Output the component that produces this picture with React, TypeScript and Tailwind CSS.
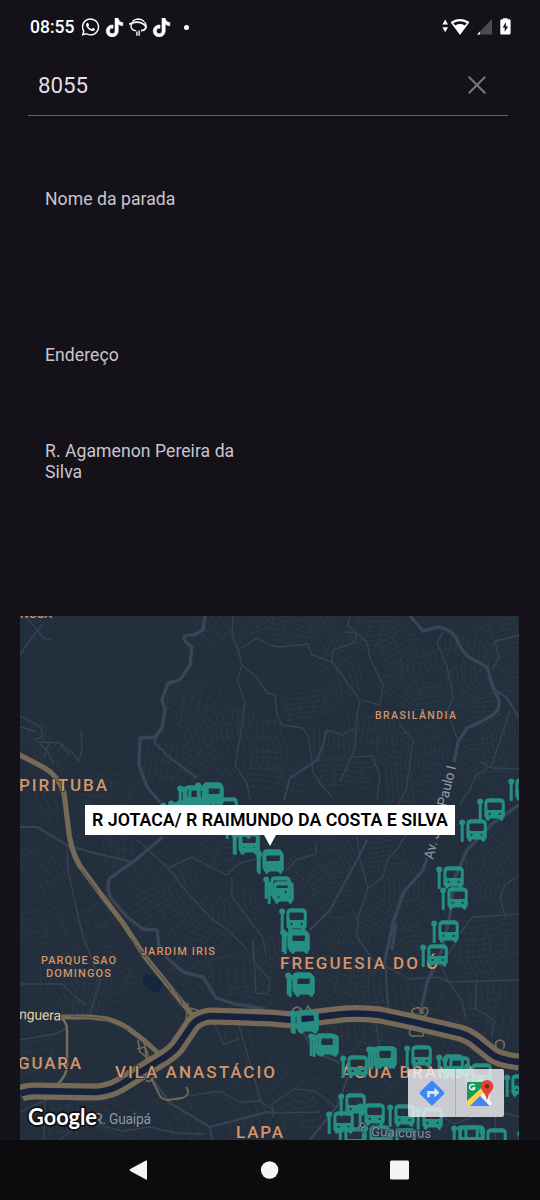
import React from "react";
import { FaWhatsapp, FaTiktok } from "react-icons/fa6";

type Pt = [number, number];

const smooth = (pts: Pt[]) => {
  let d = `M${pts[0][0]} ${pts[0][1]}`;
  for (let i = 1; i < pts.length - 1; i++) {
    const mx = (pts[i][0] + pts[i + 1][0]) / 2;
    const my = (pts[i][1] + pts[i + 1][1]) / 2;
    d += `Q${pts[i][0]} ${pts[i][1]} ${mx} ${my}`;
  }
  const l = pts[pts.length - 1];
  return d + `L${l[0]} ${l[1]}`;
};

/* cx, cy, half width, half height, angle, spacing */
const districts: number[][] = [
  [38, 740, 16, 16, 20, 6], [52, 760, 18, 10, -40, 6], [210, 628, 20, 14, 50, 6], [250, 626, 24, 12, -30, 5],
  [180, 708, 18, 20, 5, 6], [197, 695, 16, 20, 80, 9], [205, 735, 26, 22, 65, 6], [165, 762, 22, 22, 100, 6],
  [205, 768, 34, 18, 40, 6], [232, 722, 16, 18, 88, 5], [262, 745, 28, 22, 88, 6], [275, 772, 30, 18, 12, 6],
  [290, 632, 24, 14, 15, 5], [330, 632, 22, 16, 60, 5], [340, 672, 26, 16, 56, 6], [372, 632, 22, 18, 20, 5],
  [400, 650, 22, 22, -20, 6], [400, 685, 22, 16, 35, 5], [428, 668, 18, 24, 70, 6], [425, 700, 24, 12, 10, 5],
  [470, 680, 22, 24, 65, 5], [472, 640, 18, 22, 110, 6], [505, 635, 18, 20, -15, 5], [507, 670, 16, 22, 30, 5],
  [475, 705, 22, 16, 20, 5], [500, 735, 22, 20, 60, 5], [310, 705, 28, 14, -15, 5], [332, 745, 18, 22, 90, 5],
  [372, 728, 16, 26, 88, 5], [392, 750, 20, 20, 5, 6], [425, 745, 22, 22, 75, 5], [345, 775, 28, 14, 0, 5],
  [398, 782, 24, 14, 85, 5], [430, 785, 16, 20, 25, 6], [480, 760, 26, 20, -25, 5], [500, 785, 20, 16, 70, 6],
  [50, 808, 22, 14, 80, 8], [100, 820, 24, 20, 40, 7], [45, 865, 24, 18, 55, 7], [110, 790, 26, 14, 20, 8],
  [120, 850, 24, 14, 100, 7], [160, 880, 24, 24, 35, 6], [150, 910, 26, 18, -30, 6], [190, 895, 24, 22, 55, 6],
  [200, 935, 28, 18, 40, 6], [235, 910, 18, 26, 60, 6], [220, 855, 24, 16, 15, 6], [95, 920, 18, 16, 60, 8],
  [45, 925, 24, 18, -25, 7], [65, 985, 34, 22, 70, 6], [110, 975, 24, 24, 25, 7], [90, 1000, 26, 16, 100, 5],
  [190, 975, 24, 16, 30, 7], [235, 970, 20, 24, 75, 8], [270, 955, 18, 26, 50, 6], [250, 995, 24, 12, 10, 6],
  [300, 880, 24, 22, 35, 5], [335, 855, 24, 18, 60, 5], [330, 890, 20, 24, -25, 5], [345, 930, 18, 26, 85, 5],
  [380, 855, 22, 18, 15, 5], [400, 880, 22, 22, 80, 5], [375, 915, 20, 22, 30, 5], [415, 910, 16, 26, 65, 5],
  [410, 950, 22, 20, -15, 5], [470, 880, 22, 22, 70, 5], [500, 850, 20, 22, 40, 5], [500, 890, 20, 22, 110, 5],
  [485, 940, 32, 22, -10, 6], [480, 970, 34, 18, 78, 6], [345, 975, 28, 20, 5, 6], [370, 990, 24, 18, 85, 6],
  [325, 995, 22, 14, 35, 6], [410, 995, 22, 14, 70, 7], [465, 1005, 30, 14, 12, 7], [495, 1025, 22, 14, 80, 8],
  [340, 1035, 22, 16, 75, 7], [380, 1040, 22, 14, 15, 7], [440, 1060, 30, 16, 70, 8], [285, 1085, 30, 24, 35, 7],
  [240, 1110, 30, 20, 60, 8], [300, 1115, 22, 20, -20, 7], [110, 1120, 36, 16, 20, 9], [180, 1120, 30, 14, 70, 9],
  [60, 1110, 30, 16, 80, 9], [400, 1090, 30, 16, 60, 7], [440, 1125, 34, 14, 15, 7], [500, 1100, 20, 24, 70, 7],
  [240, 1050, 24, 14, 75, 12], [40, 1060, 20, 18, 10, 10], [350, 1115, 24, 22, 60, 7],
];

const streets = districts
  .map(([cx, cy, hw, hh, deg, gap], k) => {
    const a = (deg * Math.PI) / 180;
    const at = (u: number, v: number): Pt => [
      Math.round((cx + u * Math.cos(a) - v * Math.sin(a)) * 10) / 10,
      Math.round((cy + u * Math.sin(a) + v * Math.cos(a)) * 10) / 10,
    ];
    let d = "";
    for (let v = -hh, i = 0; v <= hh; v += gap, i++) {
      const cut = ((i * 7 + k * 5) % 9) - 2;
      const bend = ((k % 5) - 2) * 2.2;
      const pts: Pt[] = [];
      for (let s = 0; s <= 5; s++) {
        const u = -hw + cut + ((2 * hw - cut * 1.5) * s) / 5;
        pts.push(at(u, v + Math.sin(s * 1.25 + k) * bend));
      }
      d += smooth(pts);
    }
    for (let u = -hw + 4, i = 0; u < hw; u += gap * 2.6, i++) {
      d += smooth([at(u, -hh * 0.7), at(u + 2, 0), at(u - 1, hh * (0.3 + ((i + k) % 3) * 0.3))]);
    }
    return d;
  })
  .join("");

const minorRoads = [
  "M233 616L232 635L238 650L242 665L237 680L245 702L240 738L235 765L247 783L250 800",
  "M242 665L257 678L267 693L275 695L277 715L282 725L303 728L309 738L313 772L320 783L332 797",
  "M238 650L257 638L270 645L280 647L308 644L312 655L332 662L360 700L357 715L355 748L340 782",
  "M332 662L333 650L355 642L357 633L346 632",
  "M350 616L348 625L367 642L370 658L383 685L380 705L362 700",
  "M443 632L437 643L447 665L453 698L447 712L457 738",
  "M519 635L495 641L499 658L492 669",
  "M327 730L342 735L355 728",
  "M400 725L413 740L410 765L406 790L398 805",
  "M350 757L372 756L380 776L377 800",
  "M510 711L500 740L492 765L476 775L470 790L460 804",
  "M519 769L492 768L480 762",
  "M357 837L360 860L368 888L358 917L357 937L373 960",
  "M407 833L398 848L387 860L383 877L368 888",
  "M460 933L473 917L507 915L519 914",
  "M316 843L316 854L296 860L285 872",
  "M519 875L505 885L500 899L506 918",
  "M137 840L168 868L192 857L227 875L240 863L262 857",
  "M168 868L188 893L210 917L230 932L246 948",
  "M232 877L232 897L250 921L263 938L266 955",
  "M67 845L68 870L73 893L83 937L100 980L90 1013",
  "M20 655L30 640L42 625",
  "M28 620L37 629L43 638L51 640",
  "M20 716L41 727L42 737L33 740M20 727L35 731M37 742L60 743L71 751L79 761L82 748L81 730",
  "M40 743L48 752L54 765M50 741L44 757M60 744L70 755",
  "M373 960L410 979L438 977L449 982L519 980M456 943L440 965L449 982",
  "M449 982L462 1001L466 1020M477 980L475 1008L494 1020L492 1035",
  "M20 1040L55 1034L67 1028M20 1112L50 1098L90 1101M45 1100L44 1140",
  "M60 1140L75 1128L96 1124L122 1131L150 1127L175 1133L205 1134",
  "M273 1117L272 1104L294 1089L315 1091L337 1108M270 1113L320 1112",
  "M340 1012L375 1018L380 1050M238 1022L249 1060L262 1105M215 1025L223 1044L239 1039",
  "M188 1096L220 1091L240 1102L260 1101L275 1111",
  "M20 984L62 984L85 1005M253 940L253 960L270 980L268 994L256 993Z",
  "M430 1110L455 1124L490 1110L519 1117M495 1140L496 1104L519 1083",
];

const midRoads = [
  "M162 728L154 742L170 758L197 778",
  "M327 730L323 745L317 760L290 778L284 800",
  "M367 840L357 860L330 910L310 930",
  "M493 688L507 698L519 718",
  "M20 827L37 827L67 845L90 852L133 862",
  "M385 960L388 1008",
  "M153 1080L170 1103L210 1127L212 1140M210 1127L267 1112L278 1113",
  "M300 1028L315 1052L340 1063M350 1070L338 1105L310 1140",
];

const bigRoads = [
  "M205 616L203 630L194 635Q180 634 186 642L192 647L190 665L180 680L168 683L162 700L165 710L162 728L155 737L140 738L139 765L147 787L160 802",
  "M410 616L423 631L437 627Q452 628 458 642Q463 655 474 660L487 667L493 688Q504 705 495 713Q487 720 467 728L458 742L454 762",
  "M427 858L423 870L403 893L393 923L385 960M396 923L392 950",
  "M519 805L493 823L467 850L454 880L450 915L442 950L427 983L416 1030",
  "M163 837L133 862L110 878Q106 884 110 897L127 917L143 929L157 930L159 945L167 958L183 972L203 977L216 998L235 1004L265 1009",
];

const river =
  "M20 1094Q25 1091 35 1091L97 1092Q109 1091 120 1085L157 1062Q170 1055 177 1047L192 1025Q198 1017 212 1016L270 1018L293 1020L335 1015Q353 1012 380 1015L413 1022L460 1033Q470 1036 478 1043L493 1055Q501 1060 519 1062";

const stops: Pt[] = [
  [160, 802], [168, 800], [177, 785], [181, 786], [195, 782], [196, 784], [210, 797], [224, 816],
  [231, 831], [232, 832], [255, 849], [256, 851], [263, 876], [266, 881], [279, 908], [280, 929], [282, 931],
  [285, 972], [287, 974], [289, 1010], [291, 1011], [308, 1033], [311, 1034], [340, 1055], [366, 1046],
  [369, 1046], [404, 1045], [436, 1054], [442, 1056], [464, 1063], [504, 1074], [338, 1093], [326, 1111],
  [357, 1103], [387, 1104], [415, 1107], [337, 1127], [362, 1125], [388, 1128], [451, 1125], [457, 1125],
  [479, 1128], [517, 1130], [436, 866], [440, 887], [431, 920], [420, 944], [459, 819], [477, 798], [508, 778],
];

const Bus = ({ x, y }: { x: number; y: number }) => (
  <g transform={`translate(${x} ${y})`} fill="#268f83">
    <circle cx="3.2" cy="3.6" r="3" />
    <rect x="1.7" y="3" width="3" height="20" rx="1" />
    <path
      fillRule="evenodd"
      d="M11.5 .2H23.5Q27.4 .6 27.8 4.4V17.8Q27.7 19.8 26.2 20.4V21.2Q26 22.8 24.4 22.8Q23.2 22.8 22.8 21.4L21.8 20.4H13.4L12.4 21.4Q12 22.8 10.8 22.8Q9.2 22.8 9 21.2V20.4Q7.5 19.8 7.4 17.8V4.4Q7.8 .6 11.5 .2ZM11.8 4.4Q10.5 4.5 10.4 5.6V10.8Q10.5 12 11.8 12.1H23.4Q24.7 12 24.8 10.8V5.6Q24.7 4.5 23.4 4.4ZM12.6 14.8A1.1 1.1 0 1 0 12.6 17A1.1 1.1 0 1 0 12.6 14.8ZM22.6 14.8A1.1 1.1 0 1 0 22.6 17A1.1 1.1 0 1 0 22.6 14.8Z"
    />
  </g>
);

type LabelProps = { x: number; y: number; w: number; size: number; children: string };
const Area = ({ x, y, w, size, children }: LabelProps) => (
  <text
    x={x}
    y={y}
    textLength={w}
    fontSize={size}
    fontWeight={500}
    fill="#d59568"
    stroke="#242f3e"
    strokeWidth="1.6"
    paintOrder="stroke"
  >
    {children}
  </text>
);

function MapCanvas() {
  return (
    <svg
      viewBox="20 616 499 524"
      width="499"
      height="524"
      className="block bg-[#242f3d] font-['Roboto',sans-serif]"
      fill="none"
      strokeLinejoin="round"
    >
      <path d={streets} stroke="#2e3a48" strokeWidth=".8" />
      <path d="M143 976Q154 972 161 981Q164 990 156 993Q147 991 143 983Z" fill="#17263f" />
      <g stroke="#364251" strokeWidth="1.4">{minorRoads.map((d) => <path key={d} d={d} />)}</g>
      <g stroke="#374352" strokeWidth="2.2">{midRoads.map((d) => <path key={d} d={d} />)}</g>
      <g stroke="#394554" strokeWidth="3.4">{bigRoads.map((d) => <path key={d} d={d} />)}</g>

      <g stroke="#766a57">
        <path d="M60 1017L90 1017L107 1019Q122 1023 133 1032L145 1041L158 1053" strokeWidth="5" />
        <path d="M138 1040L140 1052L150 1060M143 1040L149 1058M155 1052L168 1050M137 1049L145 1047L147 1066" strokeWidth="1.6" />
        <path d="M61 1018Q67 1022 67 1030V1066Q67 1075 57 1085" strokeWidth="2.6" />
        <path d="M151 1078L160 1096Q163 1100 168 1100L182 1098Q189 1096 188 1090L186 1087M146 1080Q149 1084 154 1077" strokeWidth="1.8" />
        <path d="M188 1003L186 1020M190 1008L204 1012L210 1010" strokeWidth="1.5" />
        <path d="M415 1015Q408 1010 416 1008Q421 1006 421 1014M423 1014Q421 1006 427 1008Q430 1014 421 1018M410 1030Q408 1037 415 1036H423Q425 1030 418 1029" strokeWidth="1.6" />
        <path d="M292 1012Q295 1004 301 1009L304 1014L308 1006L312 1012" strokeWidth="1.6" />
        <path d="M497 1050Q493 1041 500 1040Q507 1042 503 1049" strokeWidth="1.7" />
        <path d={river} strokeWidth="17" />
      </g>
      <path d="M10 750L20 755L43 767Q58 775 64 793L68 825Q70 850 80 866L100 893L123 923L146 958L193 1016" stroke="#766a57" strokeWidth="5.2" />
      <path d="M81 869L98 892M130 938L172 990" stroke="#3f3f3f" strokeWidth=".9" />
      <path d="M170 989Q167 994 173 998L180 1006Q184 1004 180 998L174 990" stroke="#364251" strokeWidth="1" />
      <path d="M70 1016L100 1018L128 1030" stroke="#4a4943" strokeWidth=".8" />
      <path d={river} stroke="#17233c" strokeWidth="6.5" />

      <g>
        <Area x={20} y={618} w={32} size={12}>NGUA</Area>
        <Area x={375} y={719} w={81} size={10.5}>BRASILÂNDIA</Area>
        <Area x={19} y={791} w={88} size={17}>PIRITUBA</Area>
        <Area x={141} y={954.5} w={74} size={11}>JARDIM IRIS</Area>
        <Area x={41} y={964} w={75} size={11}>PARQUE SAO</Area>
        <Area x={46} y={977} w={65} size={11}>DOMINGOS</Area>
        <Area x={280} y={969} w={158} size={17}>FREGUESIA DO Ó</Area>
        <Area x={18} y={1068.5} w={63} size={17}>GUARA</Area>
        <Area x={115} y={1078} w={160} size={17}>VILA ANASTÁCIO</Area>
        <Area x={341} y={1078} w={135} size={17}>ÁGUA BRANCA</Area>
        <Area x={236} y={1137.5} w={47} size={17}>LAPA</Area>
      </g>
      <g stroke="#242f3e" strokeWidth="2" paintOrder="stroke">
        <text x="19" y="1019" fontSize="14.2" textLength="42" fill="#e3cfa0" transform="rotate(2 20 1019)">nguera</text>
        <text x="94" y="1124" fontSize="13.8" textLength="57" fill="#8e99a9">R. Guaipá</text>
        <text x="433" y="860" fontSize="13.8" textLength="96" fill="#929dab" transform="rotate(-76 433 860)">Av. João Paulo I</text>
      </g>

      {stops.map(([x, y], i) => <Bus key={i} x={x} y={y} />)}

      <g fill="#9aa5b3" stroke="#242f3e" strokeWidth="1.4" paintOrder="stroke">
        <text x="356" y="1128" fontSize="12" opacity=".7" transform="rotate(35 356 1128)">R.</text>
        <text x="371" y="1136" fontSize="13" textLength="60" opacity=".85" transform="rotate(2 371 1136)">Guaicurus</text>
      </g>
      <text
        x="28"
        y="1125"
        fontSize="22"
        fontWeight="700"
        textLength="69"
        fill="#fff"
        stroke="#0c0f14"
        strokeWidth="3.4"
        paintOrder="stroke"
        className="font-['Lato',sans-serif]"
      >
        Google
      </text>
    </svg>
  );
}

function MapButtons() {
  return (
    <div className="absolute top-[453px] left-[388px] flex h-12 w-24 rounded-[2px] bg-[#f4f4f6]/80">
      <div className="flex w-12 items-center justify-center border-r border-[#aaaeb4]">
        <svg width="26" height="26" viewBox="0 0 26 26">
          <path d="M11.8 1.2Q13 .2 14.2 1.2L24.8 11.8Q25.8 13 24.8 14.2L14.2 24.8Q13 25.8 11.8 24.8L1.2 14.2Q.2 13 1.2 11.8Z" fill="#4285f4" />
          <path d="M8.2 17.2V11H15.4V7.6L20.4 12.6L15.4 17.4V14H10.9V17.2Z" fill="#dce4f3" />
        </svg>
      </div>
      <div className="flex w-12 items-center justify-center">
        <svg width="28" height="28" viewBox="0 0 28 28">
          <path d="M1 3H24V27H1Z" fill="#e7e7e7" />
          <path d="M1 3H21L1 24Z" fill="#189b59" />
          <path d="M1 22L18 7L21 12L6 27H1Z" fill="#fbd448" />
          <path d="M4 27L14 17L24 27Z" fill="#4285f4" />
          <path d="M14.5 16.8L17.2 14L26 24L24 27Z" fill="#f4f4f4" />
          <path d="M21 1A6.3 6.3 0 0 1 27.3 7.3C27.3 12 22.4 13.5 21.4 20.5H20.6C19.6 13.5 14.7 12 14.7 7.3A6.3 6.3 0 0 1 21 1Z" fill="#df4335" />
          <circle cx="21" cy="7.2" r="2.3" fill="#7f231c" />
          <path d="M8.5 6.4A2.7 2.7 0 1 0 8.9 9H6.3" fill="none" stroke="#fff" strokeWidth="1.3" />
        </svg>
      </div>
    </div>
  );
}

function StatusBar() {
  return (
    <header className="flex h-14 items-center justify-between pr-[29px] pb-0.5 pl-[30px] text-white">
      <div className="flex items-center">
        <span className="w-[51px] text-[17.5px] leading-5 font-medium">08:55</span>
        <FaWhatsapp className="h-[20px] w-[19px]" />
        <FaTiktok className="ml-[5px] h-[19px] w-[19px] stroke-white stroke-[14]" />
        <svg className="ml-[5px]" width="18" height="19" viewBox="0 0 18 19" fill="none" stroke="#fff">
          <path d="M3.4 3.4Q6 1 9.5 1Q12.8 1.1 15 3.4" strokeWidth="1.4" />
          <path d="M.2 6.2Q7.5 2.6 13 5.2Q17.4 7.6 16.8 9.8Q15.5 12.6 12 12.6" strokeWidth="1.7" />
          <path d="M3 5.4Q1 9 3.2 11.2Q4.8 12.8 7.2 12.6M15.4 3.8Q17.6 6.4 17 9.4" strokeWidth="1.3" />
          <path d="M7.9 13.4V17.8M10.2 12.6V17.8" strokeWidth="1.7" stroke="#cfcfd2" />
        </svg>
        <FaTiktok className="ml-[5px] h-[19px] w-[19px] stroke-white stroke-[14]" />
        <span className="ml-[13px] h-[5px] w-[5px] rounded-full bg-white" />
      </div>
      <svg width="69" height="18" viewBox="0 0 69 18" fill="#fff">
        <path d="M3.2 1.6L6 6.6H.4ZM3.2 14.2L.4 9.2H6Z" />
        <path fillRule="evenodd" d="M18 17L8.8 4.6Q8.8 3.8 10 3.2Q18-1.2 26 3.2Q27.3 3.8 27.2 4.6ZM11.3 4.9L13.2 7.4Q18 4.8 22.9 7.4L24.8 4.9Q18 1.4 11.3 4.9Z" />
        <path d="M50 1V16.5H35Z" fill="#4d4b50" />
        <path d="M38 13.4V16.5H35Z" />
        <path fillRule="evenodd" d="M61 1.2V.2H65.6V1.2H67.2Q68.6 1.3 68.6 2.6V15.2Q68.6 16.4 67.2 16.5H59.6Q58.3 16.4 58.3 15.2V2.6Q58.3 1.3 59.6 1.2ZM63.9 4.2L60.6 9.6H62.7V13.8L66.2 8.4H63.9Z" />
      </svg>
    </header>
  );
}

export default function App() {
  return (
    <div className="flex h-[1200px] w-[540px] flex-col overflow-hidden bg-[#141218] font-['Roboto',sans-serif]">
      <StatusBar />
      <div className="mr-8 ml-7 flex h-[60px] items-center justify-between border-b border-[#66646a] pr-[22px] pb-0.5 pl-[10px]">
        <span className="pt-0.5 text-[22.3px] leading-none text-[#e2dde6]">8055</span>
        <svg width="18" height="18" viewBox="0 0 18 18" stroke="#777579" strokeWidth="2.1" strokeLinecap="round">
          <path d="M1.3 1.3L16.7 16.7M16.7 1.3L1.3 16.7" />
        </svg>
      </div>
      <main className="flex h-[500px] flex-col pt-[73px] pl-[45px] text-[17.6px] leading-[20.5px] tracking-[0.05px] text-[#cac5cd]">
        <p className="h-[156px]">Nome da parada</p>
        <p className="h-[96px]">Endereço</p>
        <p className="w-[210px]">R. Agamenon Pereira da Silva</p>
      </main>
      <section className="relative ml-5 h-[524px] w-[499px] overflow-hidden">
        <MapCanvas />
        <div className="absolute top-[189px] left-[65px] flex h-[30px] w-[370px] items-center justify-center bg-white text-[17.8px] leading-none font-semibold whitespace-nowrap text-black">
          R JOTACA/ R RAIMUNDO DA COSTA E SILVA
          <svg className="absolute top-[30px] left-[179px]" width="12" height="11" viewBox="0 0 12 11">
            <path d="M0 0H12L6 11Z" fill="#fff" />
          </svg>
        </div>
        <MapButtons />
      </section>
      <nav className="flex h-[60px] items-center bg-[#0c0c0e] pl-[129px]">
        <svg width="281" height="22" viewBox="0 0 281 22" fill="#f5f5f8">
          <path d="M17 1.6Q18 1 18 2V20Q18 21 17 20.4L1.2 12Q0 11 1.2 10Z" />
          <circle cx="140.6" cy="11" r="8.7" />
          <rect x="261" y="1.5" width="19" height="19" rx="1.5" />
        </svg>
      </nav>
    </div>
  );
}
